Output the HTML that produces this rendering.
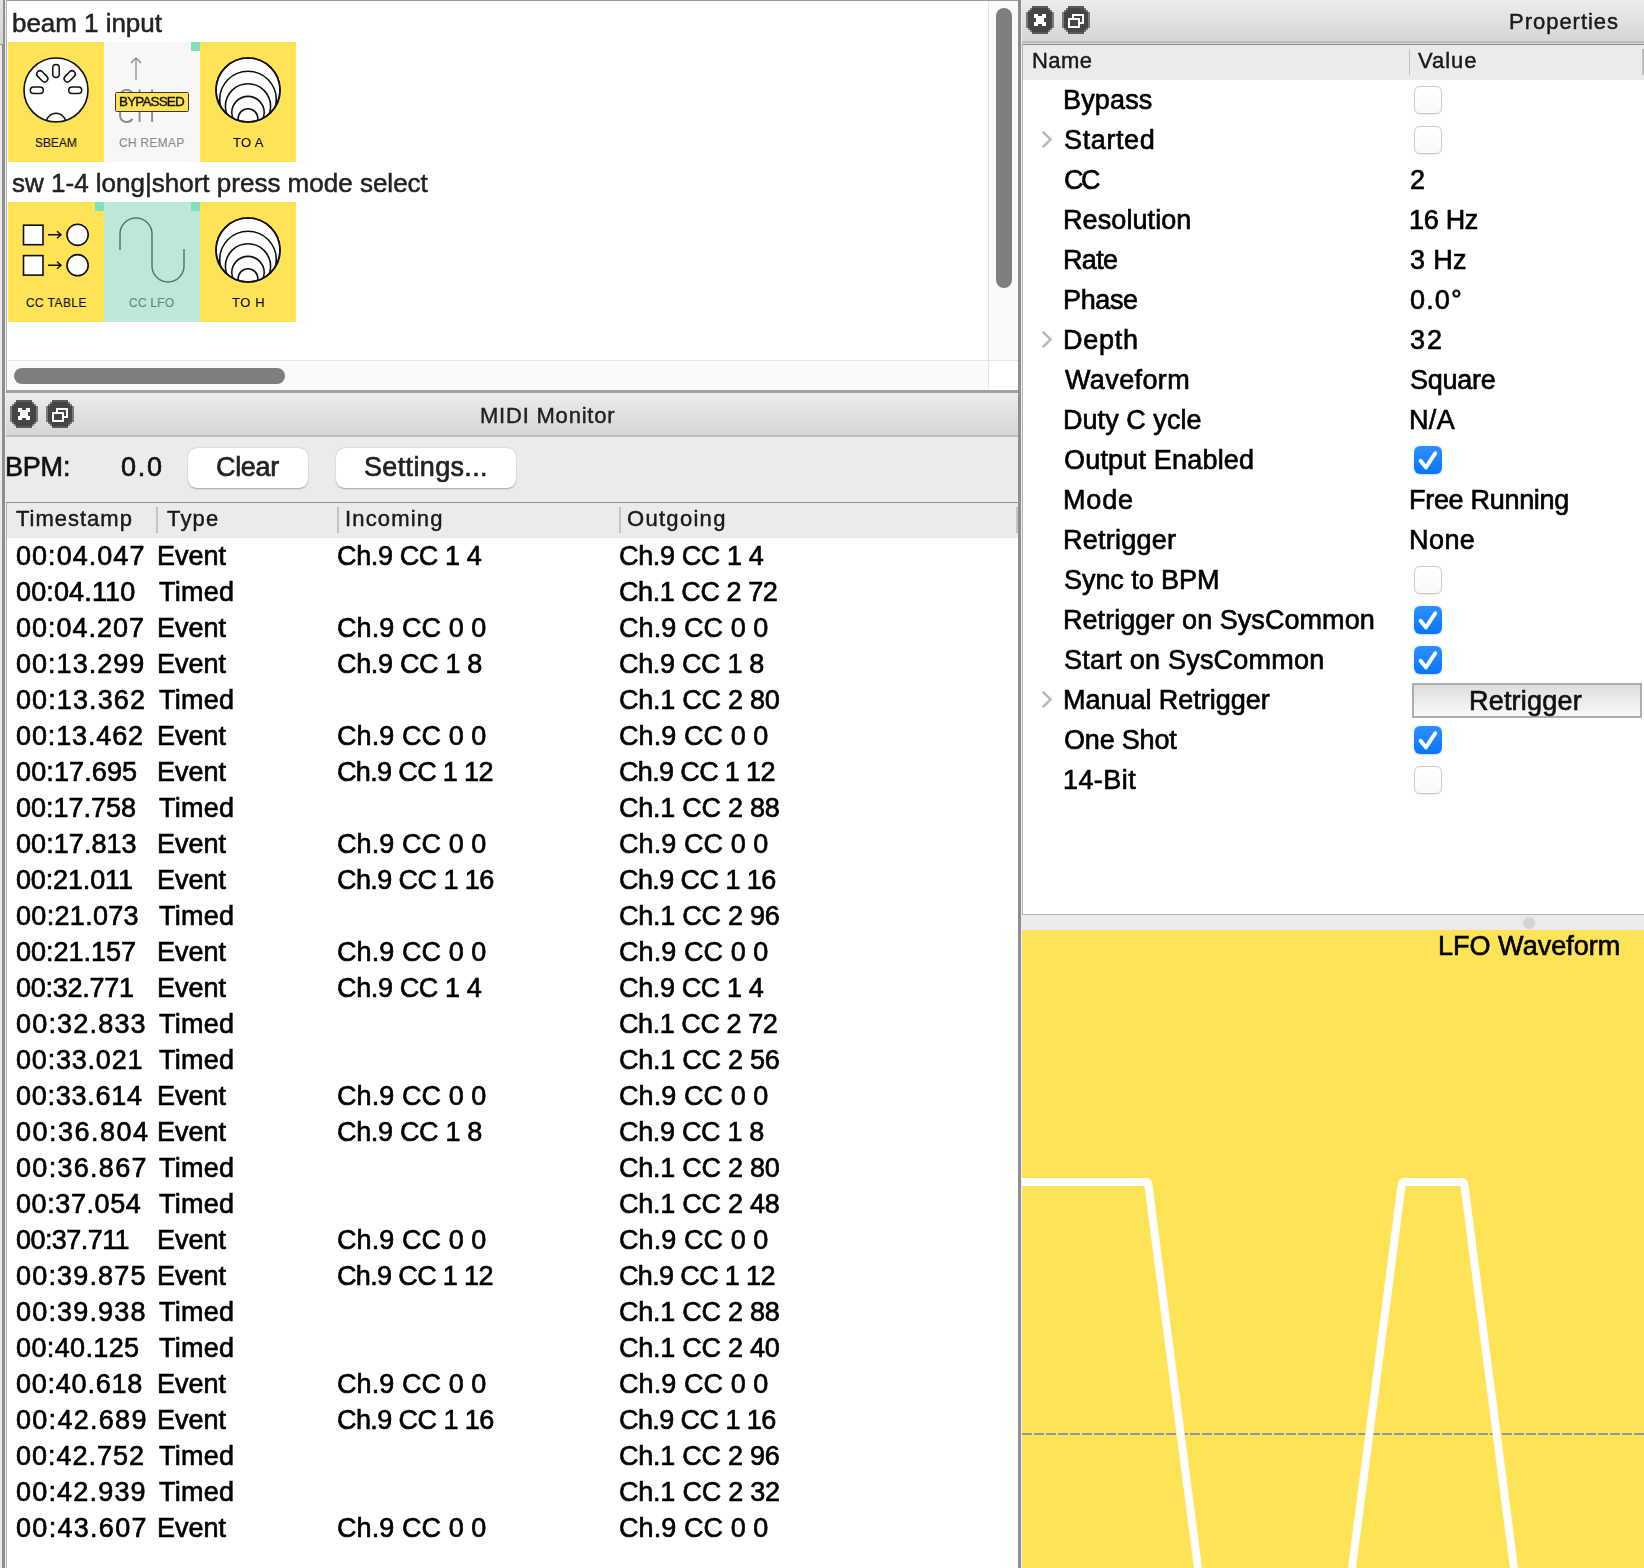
<!DOCTYPE html>
<html><head><meta charset="utf-8"><style>
html,body{margin:0;padding:0;}
body{width:1644px;height:1568px;overflow:hidden;position:relative;background:#ebebeb;font-family:"Liberation Sans", sans-serif;}
body>div,.abs,.t{position:absolute;}
.t{white-space:pre;will-change:transform;}
</style></head><body>
<div style="left:0px;top:0px;width:3px;height:44px;background:linear-gradient(#e2e2e2,#d6d6d6)"></div>
<div style="left:0px;top:44px;width:3px;height:1px;background:#8e8e8e"></div>
<div style="left:2px;top:45px;width:3px;height:1523px;background:#8e8e8e"></div>
<div style="left:3px;top:0px;width:2px;height:45px;background:#8e8e8e"></div>
<div style="left:5px;top:0px;width:1px;height:1568px;background:#eeeeee"></div>
<div style="left:6px;top:0px;width:1px;height:393px;background:#b4b4b4"></div>
<div style="left:7px;top:0px;width:1011px;height:1px;background:#9a9a9a"></div>
<div style="left:7px;top:1px;width:1011px;height:389px;background:#fff"></div>
<div style="left:988px;top:1px;width:30px;height:359px;background:#fafafa;border-left:1px solid #e6e6e6;box-sizing:border-box"></div>
<div style="left:996px;top:8px;width:16px;height:280px;background:#7f7f7f;border-radius:8px"></div>
<div style="left:7px;top:360px;width:981px;height:30px;background:#fafafa;border-top:1px solid #e6e6e6;box-sizing:border-box"></div>
<div style="left:14px;top:368px;width:271px;height:16px;background:#7f7f7f;border-radius:8px"></div>
<div style="left:988px;top:360px;width:30px;height:30px;background:#fff;border-left:1px solid #e6e6e6;border-top:1px solid #e6e6e6;box-sizing:border-box"></div>
<div style="left:6px;top:390px;width:1012px;height:3px;background:#a2a2a2"></div>
<span class="t" style="left:11.60px;top:9.79px;font-size:26px;line-height:26px;color:#222;letter-spacing:-0.036px;-webkit-text-stroke:0.5px #222;">beam 1 input</span>
<span class="t" style="left:11.50px;top:169.69px;font-size:26px;line-height:26px;color:#222;letter-spacing:0.003px;-webkit-text-stroke:0.5px #222;">sw 1-4 long|short press mode select</span>
<div style="left:8px;top:42px;width:96px;height:120px;background:#fee356"></div>
<div style="left:104px;top:42px;width:96px;height:120px;background:#f7f7f7"></div>
<div style="left:191px;top:42px;width:9px;height:9px;background:#80dfbd"></div>
<div style="left:200px;top:42px;width:96px;height:120px;background:#fee356"></div>
<div style="left:8px;top:202px;width:96px;height:120px;background:#fee356"></div>
<div style="left:95px;top:202px;width:9px;height:9px;background:#80dfbd"></div>
<div style="left:104px;top:202px;width:96px;height:120px;background:#bde8d8"></div>
<div style="left:191px;top:202px;width:9px;height:9px;background:#80dfbd"></div>
<div style="left:200px;top:202px;width:96px;height:120px;background:#fee356"></div>
<span class="t" style="left:35.04px;top:136.30px;font-size:13px;line-height:13px;color:#111;letter-spacing:0.005px;-webkit-text-stroke:0.15px #111;transform:scaleX(0.92);transform-origin:0 0;">SBEAM</span>
<span class="t" style="left:119.45px;top:136.30px;font-size:13px;line-height:13px;color:#888;letter-spacing:0.324px;-webkit-text-stroke:0.15px #888;transform:scaleX(0.92);transform-origin:0 0;">CH REMAP</span>
<span class="t" style="left:232.60px;top:136.30px;font-size:13px;line-height:13px;color:#111;letter-spacing:0.333px;-webkit-text-stroke:0.15px #111;">TO A</span>
<span class="t" style="left:25.95px;top:296.30px;font-size:13px;line-height:13px;color:#111;letter-spacing:0.482px;-webkit-text-stroke:0.15px #111;transform:scaleX(0.92);transform-origin:0 0;">CC TABLE</span>
<span class="t" style="left:129.45px;top:296.30px;font-size:13px;line-height:13px;color:#5b8a7b;letter-spacing:0.309px;-webkit-text-stroke:0.15px #5b8a7b;transform:scaleX(0.92);transform-origin:0 0;">CC LFO</span>
<span class="t" style="left:231.80px;top:296.30px;font-size:13px;line-height:13px;color:#111;letter-spacing:0.600px;-webkit-text-stroke:0.15px #111;">TO H</span>
<svg class="abs" width="300" height="330" style="left:0;top:0"><circle cx="56" cy="90" r="32" fill="#fff" stroke="#111" stroke-width="1.6"/><rect x="52.75" y="64.5" width="6.5" height="13" rx="3.25" fill="#fff" stroke="#111" stroke-width="1.5" transform="rotate(0 56 71)"/><rect x="39.05" y="69.9" width="6.5" height="13" rx="3.25" fill="#fff" stroke="#111" stroke-width="1.5" transform="rotate(-45 42.3 76.4)"/><rect x="66.45" y="69.9" width="6.5" height="13" rx="3.25" fill="#fff" stroke="#111" stroke-width="1.5" transform="rotate(45 69.7 76.4)"/><rect x="30.299999999999997" y="87.05" width="13" height="6.5" rx="3.25" fill="#fff" stroke="#111" stroke-width="1.5" transform="rotate(0 36.8 90.3)"/><rect x="68.7" y="87.05" width="13" height="6.5" rx="3.25" fill="#fff" stroke="#111" stroke-width="1.5" transform="rotate(0 75.2 90.3)"/><path d="M46.3 120.8 A10 10 0 0 1 65.7 120.8" fill="none" stroke="#111" stroke-width="1.5"/><clipPath id="c1"><circle cx="248" cy="90" r="32"/></clipPath><circle cx="248" cy="90" r="32" fill="#fff" stroke="#111" stroke-width="1.6"/><g clip-path="url(#c1)" fill="none" stroke="#111" stroke-width="1.6"><circle cx="248" cy="99.5" r="28.3"/><circle cx="248" cy="106.3" r="22.6"/><circle cx="248" cy="112.6" r="16.2"/><circle cx="248" cy="118.6" r="9.9"/></g><circle cx="248" cy="90" r="32" fill="none" stroke="#111" stroke-width="1.6"/><clipPath id="c2"><circle cx="248" cy="250" r="32"/></clipPath><circle cx="248" cy="250" r="32" fill="#fff" stroke="#111" stroke-width="1.6"/><g clip-path="url(#c2)" fill="none" stroke="#111" stroke-width="1.6"><circle cx="248" cy="259.5" r="28.3"/><circle cx="248" cy="266.3" r="22.6"/><circle cx="248" cy="272.6" r="16.2"/><circle cx="248" cy="278.6" r="9.9"/></g><circle cx="248" cy="250" r="32" fill="none" stroke="#111" stroke-width="1.6"/><path d="M136 80 V58 M131 63 L136 58 L141 63" fill="none" stroke="#8a8a8a" stroke-width="1.3"/><path d="M132.4 93.2 A6.6 6.6 0 0 0 120.1 96.7 V115.2 A6.6 6.6 0 0 0 132.4 118.7" fill="none" stroke="#8c8c8c" stroke-width="1.9"/><path d="M139.6 89.5 V122 M152.1 89.5 V122 M139.6 105.6 H152.1" fill="none" stroke="#8c8c8c" stroke-width="1.9"/><rect x="23.5" y="225.20000000000002" width="19.5" height="19.5" fill="#fff" stroke="#111" stroke-width="1.6"/><circle cx="77.6" cy="234.8" r="10.6" fill="#fff" stroke="#111" stroke-width="1.6"/><path d="M48 234.8 H61 M57 231.3 L61 234.8 L57 238.3" fill="none" stroke="#111" stroke-width="1.5"/><rect x="23.5" y="255.6" width="19.5" height="19.5" fill="#fff" stroke="#111" stroke-width="1.6"/><circle cx="77.6" cy="265.2" r="10.6" fill="#fff" stroke="#111" stroke-width="1.6"/><path d="M48 265.2 H61 M57 261.7 L61 265.2 L57 268.7" fill="none" stroke="#111" stroke-width="1.5"/><path d="M120 250 V234 A16 16 0 0 1 152 234 V266 A16 16 0 0 0 184 266 V249" fill="none" stroke="#4f7b6c" stroke-width="1.5"/></svg>
<div style="left:115.2px;top:92.3px;width:73.6px;height:19.3px;background:#fee356;border:1.7px solid #3a3530;border-radius:1.5px;box-sizing:border-box"></div>
<span class="t" style="left:118.70px;top:95.37px;font-size:13.5px;line-height:13.5px;color:#111;letter-spacing:-0.871px;-webkit-text-stroke:0.35px #111;">BYPASSED</span>
<div style="left:6px;top:393px;width:1012px;height:42px;background:linear-gradient(#ececec,#d6d6d6)"></div>
<div style="left:6px;top:435px;width:1012px;height:2px;background:#bbbbbb"></div>
<div style="left:6px;top:437px;width:1012px;height:65px;background:#ebebeb"></div>
<span class="t" style="left:480.10px;top:405.08px;font-size:22px;line-height:22px;color:#222;letter-spacing:0.791px;-webkit-text-stroke:0.45px #222;">MIDI Monitor</span>
<div style="left:188px;top:448px;width:120px;height:40px;background:#fff;border-radius:9px;box-shadow:0 0.5px 1.5px rgba(0,0,0,0.3)"></div>
<div style="left:336px;top:448px;width:180px;height:40px;background:#fff;border-radius:9px;box-shadow:0 0.5px 1.5px rgba(0,0,0,0.3)"></div>
<span class="t" style="left:4.90px;top:454.04px;font-size:27px;line-height:27px;color:#111;letter-spacing:-0.200px;-webkit-text-stroke:0.65px #111;">BPM:</span>
<span class="t" style="left:120.50px;top:454.04px;font-size:27px;line-height:27px;color:#111;letter-spacing:1.700px;-webkit-text-stroke:0.65px #111;">0.0</span>
<span class="t" style="left:215.70px;top:454.04px;font-size:27px;line-height:27px;color:#222;letter-spacing:-0.350px;-webkit-text-stroke:0.65px #222;">Clear</span>
<span class="t" style="left:364.10px;top:454.04px;font-size:27px;line-height:27px;color:#222;letter-spacing:0.350px;-webkit-text-stroke:0.65px #222;">Settings...</span>
<div style="left:6px;top:502px;width:1012px;height:1px;background:#8e8e8e"></div>
<div style="left:6px;top:503px;width:1px;height:1065px;background:#b4b4b4"></div>
<div style="left:7px;top:503px;width:1011px;height:35px;background:#ebebeb"></div>
<div style="left:7px;top:538px;width:1011px;height:1030px;background:#fff"></div>
<div style="left:156px;top:507px;width:1.5px;height:26px;background:#c4c4c4"></div>
<div style="left:337px;top:507px;width:1.5px;height:26px;background:#c4c4c4"></div>
<div style="left:619px;top:507px;width:1.5px;height:26px;background:#c4c4c4"></div>
<div style="left:1016px;top:507px;width:1.5px;height:26px;background:#c4c4c4"></div>
<span class="t" style="left:16.20px;top:508.38px;font-size:22px;line-height:22px;color:#1a1a1a;letter-spacing:0.987px;-webkit-text-stroke:0.45px #1a1a1a;">Timestamp</span>
<span class="t" style="left:167.10px;top:508.38px;font-size:22px;line-height:22px;color:#1a1a1a;letter-spacing:1.200px;-webkit-text-stroke:0.45px #1a1a1a;">Type</span>
<span class="t" style="left:344.70px;top:508.38px;font-size:22px;line-height:22px;color:#1a1a1a;letter-spacing:1.157px;-webkit-text-stroke:0.45px #1a1a1a;">Incoming</span>
<span class="t" style="left:627.30px;top:508.38px;font-size:22px;line-height:22px;color:#1a1a1a;letter-spacing:1.300px;-webkit-text-stroke:0.45px #1a1a1a;">Outgoing</span>
<span class="t" style="left:15.50px;top:542.94px;font-size:27px;line-height:27px;color:#000;letter-spacing:1.037px;-webkit-text-stroke:0.65px #000;">00:04.047</span>
<span class="t" style="left:157.40px;top:542.94px;font-size:27px;line-height:27px;color:#000;letter-spacing:0.000px;-webkit-text-stroke:0.65px #000;">Event</span>
<span class="t" style="left:337.40px;top:542.94px;font-size:27px;line-height:27px;color:#000;letter-spacing:-0.370px;-webkit-text-stroke:0.65px #000;">Ch.9 CC 1 4</span>
<span class="t" style="left:619.40px;top:542.94px;font-size:27px;line-height:27px;color:#000;letter-spacing:-0.370px;-webkit-text-stroke:0.65px #000;">Ch.9 CC 1 4</span>
<span class="t" style="left:15.50px;top:578.94px;font-size:27px;line-height:27px;color:#000;letter-spacing:0.137px;-webkit-text-stroke:0.65px #000;">00:04.110</span>
<span class="t" style="left:159.00px;top:578.94px;font-size:27px;line-height:27px;color:#000;letter-spacing:0.275px;-webkit-text-stroke:0.65px #000;">Timed</span>
<span class="t" style="left:619.40px;top:578.94px;font-size:27px;line-height:27px;color:#000;letter-spacing:-0.436px;-webkit-text-stroke:0.65px #000;">Ch.1 CC 2 72</span>
<span class="t" style="left:15.50px;top:614.94px;font-size:27px;line-height:27px;color:#000;letter-spacing:0.975px;-webkit-text-stroke:0.65px #000;">00:04.207</span>
<span class="t" style="left:157.40px;top:614.94px;font-size:27px;line-height:27px;color:#000;letter-spacing:0.000px;-webkit-text-stroke:0.65px #000;">Event</span>
<span class="t" style="left:337.40px;top:614.94px;font-size:27px;line-height:27px;color:#000;letter-spacing:0.080px;-webkit-text-stroke:0.65px #000;">Ch.9 CC 0 0</span>
<span class="t" style="left:619.40px;top:614.94px;font-size:27px;line-height:27px;color:#000;letter-spacing:0.080px;-webkit-text-stroke:0.65px #000;">Ch.9 CC 0 0</span>
<span class="t" style="left:15.50px;top:650.94px;font-size:27px;line-height:27px;color:#000;letter-spacing:1.025px;-webkit-text-stroke:0.65px #000;">00:13.299</span>
<span class="t" style="left:157.40px;top:650.94px;font-size:27px;line-height:27px;color:#000;letter-spacing:0.000px;-webkit-text-stroke:0.65px #000;">Event</span>
<span class="t" style="left:337.40px;top:650.94px;font-size:27px;line-height:27px;color:#000;letter-spacing:-0.330px;-webkit-text-stroke:0.65px #000;">Ch.9 CC 1 8</span>
<span class="t" style="left:619.40px;top:650.94px;font-size:27px;line-height:27px;color:#000;letter-spacing:-0.330px;-webkit-text-stroke:0.65px #000;">Ch.9 CC 1 8</span>
<span class="t" style="left:15.50px;top:686.94px;font-size:27px;line-height:27px;color:#000;letter-spacing:1.100px;-webkit-text-stroke:0.65px #000;">00:13.362</span>
<span class="t" style="left:159.00px;top:686.94px;font-size:27px;line-height:27px;color:#000;letter-spacing:0.275px;-webkit-text-stroke:0.65px #000;">Timed</span>
<span class="t" style="left:619.40px;top:686.94px;font-size:27px;line-height:27px;color:#000;letter-spacing:-0.255px;-webkit-text-stroke:0.65px #000;">Ch.1 CC 2 80</span>
<span class="t" style="left:15.50px;top:722.94px;font-size:27px;line-height:27px;color:#000;letter-spacing:0.875px;-webkit-text-stroke:0.65px #000;">00:13.462</span>
<span class="t" style="left:157.40px;top:722.94px;font-size:27px;line-height:27px;color:#000;letter-spacing:0.000px;-webkit-text-stroke:0.65px #000;">Event</span>
<span class="t" style="left:337.40px;top:722.94px;font-size:27px;line-height:27px;color:#000;letter-spacing:0.080px;-webkit-text-stroke:0.65px #000;">Ch.9 CC 0 0</span>
<span class="t" style="left:619.40px;top:722.94px;font-size:27px;line-height:27px;color:#000;letter-spacing:0.080px;-webkit-text-stroke:0.65px #000;">Ch.9 CC 0 0</span>
<span class="t" style="left:15.50px;top:758.94px;font-size:27px;line-height:27px;color:#000;letter-spacing:0.125px;-webkit-text-stroke:0.65px #000;">00:17.695</span>
<span class="t" style="left:157.40px;top:758.94px;font-size:27px;line-height:27px;color:#000;letter-spacing:0.000px;-webkit-text-stroke:0.65px #000;">Event</span>
<span class="t" style="left:337.40px;top:758.94px;font-size:27px;line-height:27px;color:#000;letter-spacing:-0.645px;-webkit-text-stroke:0.65px #000;">Ch.9 CC 1 12</span>
<span class="t" style="left:619.40px;top:758.94px;font-size:27px;line-height:27px;color:#000;letter-spacing:-0.645px;-webkit-text-stroke:0.65px #000;">Ch.9 CC 1 12</span>
<span class="t" style="left:15.50px;top:794.94px;font-size:27px;line-height:27px;color:#000;letter-spacing:0.000px;-webkit-text-stroke:0.65px #000;">00:17.758</span>
<span class="t" style="left:159.00px;top:794.94px;font-size:27px;line-height:27px;color:#000;letter-spacing:0.275px;-webkit-text-stroke:0.65px #000;">Timed</span>
<span class="t" style="left:619.40px;top:794.94px;font-size:27px;line-height:27px;color:#000;letter-spacing:-0.245px;-webkit-text-stroke:0.65px #000;">Ch.1 CC 2 88</span>
<span class="t" style="left:15.50px;top:830.94px;font-size:27px;line-height:27px;color:#000;letter-spacing:0.062px;-webkit-text-stroke:0.65px #000;">00:17.813</span>
<span class="t" style="left:157.40px;top:830.94px;font-size:27px;line-height:27px;color:#000;letter-spacing:0.000px;-webkit-text-stroke:0.65px #000;">Event</span>
<span class="t" style="left:337.40px;top:830.94px;font-size:27px;line-height:27px;color:#000;letter-spacing:0.080px;-webkit-text-stroke:0.65px #000;">Ch.9 CC 0 0</span>
<span class="t" style="left:619.40px;top:830.94px;font-size:27px;line-height:27px;color:#000;letter-spacing:0.080px;-webkit-text-stroke:0.65px #000;">Ch.9 CC 0 0</span>
<span class="t" style="left:15.50px;top:866.94px;font-size:27px;line-height:27px;color:#000;letter-spacing:-0.150px;-webkit-text-stroke:0.65px #000;">00:21.011</span>
<span class="t" style="left:157.40px;top:866.94px;font-size:27px;line-height:27px;color:#000;letter-spacing:0.000px;-webkit-text-stroke:0.65px #000;">Event</span>
<span class="t" style="left:337.40px;top:866.94px;font-size:27px;line-height:27px;color:#000;letter-spacing:-0.582px;-webkit-text-stroke:0.65px #000;">Ch.9 CC 1 16</span>
<span class="t" style="left:619.40px;top:866.94px;font-size:27px;line-height:27px;color:#000;letter-spacing:-0.582px;-webkit-text-stroke:0.65px #000;">Ch.9 CC 1 16</span>
<span class="t" style="left:15.50px;top:902.94px;font-size:27px;line-height:27px;color:#000;letter-spacing:0.312px;-webkit-text-stroke:0.65px #000;">00:21.073</span>
<span class="t" style="left:159.00px;top:902.94px;font-size:27px;line-height:27px;color:#000;letter-spacing:0.275px;-webkit-text-stroke:0.65px #000;">Timed</span>
<span class="t" style="left:619.40px;top:902.94px;font-size:27px;line-height:27px;color:#000;letter-spacing:-0.245px;-webkit-text-stroke:0.65px #000;">Ch.1 CC 2 96</span>
<span class="t" style="left:15.50px;top:938.94px;font-size:27px;line-height:27px;color:#000;letter-spacing:-0.025px;-webkit-text-stroke:0.65px #000;">00:21.157</span>
<span class="t" style="left:157.40px;top:938.94px;font-size:27px;line-height:27px;color:#000;letter-spacing:0.000px;-webkit-text-stroke:0.65px #000;">Event</span>
<span class="t" style="left:337.40px;top:938.94px;font-size:27px;line-height:27px;color:#000;letter-spacing:0.080px;-webkit-text-stroke:0.65px #000;">Ch.9 CC 0 0</span>
<span class="t" style="left:619.40px;top:938.94px;font-size:27px;line-height:27px;color:#000;letter-spacing:0.080px;-webkit-text-stroke:0.65px #000;">Ch.9 CC 0 0</span>
<span class="t" style="left:15.50px;top:974.94px;font-size:27px;line-height:27px;color:#000;letter-spacing:-0.250px;-webkit-text-stroke:0.65px #000;">00:32.771</span>
<span class="t" style="left:157.40px;top:974.94px;font-size:27px;line-height:27px;color:#000;letter-spacing:0.000px;-webkit-text-stroke:0.65px #000;">Event</span>
<span class="t" style="left:337.40px;top:974.94px;font-size:27px;line-height:27px;color:#000;letter-spacing:-0.370px;-webkit-text-stroke:0.65px #000;">Ch.9 CC 1 4</span>
<span class="t" style="left:619.40px;top:974.94px;font-size:27px;line-height:27px;color:#000;letter-spacing:-0.370px;-webkit-text-stroke:0.65px #000;">Ch.9 CC 1 4</span>
<span class="t" style="left:15.50px;top:1010.94px;font-size:27px;line-height:27px;color:#000;letter-spacing:1.188px;-webkit-text-stroke:0.65px #000;">00:32.833</span>
<span class="t" style="left:159.00px;top:1010.94px;font-size:27px;line-height:27px;color:#000;letter-spacing:0.275px;-webkit-text-stroke:0.65px #000;">Timed</span>
<span class="t" style="left:619.40px;top:1010.94px;font-size:27px;line-height:27px;color:#000;letter-spacing:-0.436px;-webkit-text-stroke:0.65px #000;">Ch.1 CC 2 72</span>
<span class="t" style="left:15.50px;top:1046.94px;font-size:27px;line-height:27px;color:#000;letter-spacing:0.800px;-webkit-text-stroke:0.65px #000;">00:33.021</span>
<span class="t" style="left:159.00px;top:1046.94px;font-size:27px;line-height:27px;color:#000;letter-spacing:0.275px;-webkit-text-stroke:0.65px #000;">Timed</span>
<span class="t" style="left:619.40px;top:1046.94px;font-size:27px;line-height:27px;color:#000;letter-spacing:-0.245px;-webkit-text-stroke:0.65px #000;">Ch.1 CC 2 56</span>
<span class="t" style="left:15.50px;top:1082.94px;font-size:27px;line-height:27px;color:#000;letter-spacing:0.725px;-webkit-text-stroke:0.65px #000;">00:33.614</span>
<span class="t" style="left:157.40px;top:1082.94px;font-size:27px;line-height:27px;color:#000;letter-spacing:0.000px;-webkit-text-stroke:0.65px #000;">Event</span>
<span class="t" style="left:337.40px;top:1082.94px;font-size:27px;line-height:27px;color:#000;letter-spacing:0.080px;-webkit-text-stroke:0.65px #000;">Ch.9 CC 0 0</span>
<span class="t" style="left:619.40px;top:1082.94px;font-size:27px;line-height:27px;color:#000;letter-spacing:0.080px;-webkit-text-stroke:0.65px #000;">Ch.9 CC 0 0</span>
<span class="t" style="left:15.50px;top:1118.94px;font-size:27px;line-height:27px;color:#000;letter-spacing:1.500px;-webkit-text-stroke:0.65px #000;">00:36.804</span>
<span class="t" style="left:157.40px;top:1118.94px;font-size:27px;line-height:27px;color:#000;letter-spacing:0.000px;-webkit-text-stroke:0.65px #000;">Event</span>
<span class="t" style="left:337.40px;top:1118.94px;font-size:27px;line-height:27px;color:#000;letter-spacing:-0.330px;-webkit-text-stroke:0.65px #000;">Ch.9 CC 1 8</span>
<span class="t" style="left:619.40px;top:1118.94px;font-size:27px;line-height:27px;color:#000;letter-spacing:-0.330px;-webkit-text-stroke:0.65px #000;">Ch.9 CC 1 8</span>
<span class="t" style="left:15.50px;top:1154.94px;font-size:27px;line-height:27px;color:#000;letter-spacing:1.300px;-webkit-text-stroke:0.65px #000;">00:36.867</span>
<span class="t" style="left:159.00px;top:1154.94px;font-size:27px;line-height:27px;color:#000;letter-spacing:0.275px;-webkit-text-stroke:0.65px #000;">Timed</span>
<span class="t" style="left:619.40px;top:1154.94px;font-size:27px;line-height:27px;color:#000;letter-spacing:-0.255px;-webkit-text-stroke:0.65px #000;">Ch.1 CC 2 80</span>
<span class="t" style="left:15.50px;top:1190.94px;font-size:27px;line-height:27px;color:#000;letter-spacing:0.587px;-webkit-text-stroke:0.65px #000;">00:37.054</span>
<span class="t" style="left:159.00px;top:1190.94px;font-size:27px;line-height:27px;color:#000;letter-spacing:0.275px;-webkit-text-stroke:0.65px #000;">Timed</span>
<span class="t" style="left:619.40px;top:1190.94px;font-size:27px;line-height:27px;color:#000;letter-spacing:-0.245px;-webkit-text-stroke:0.65px #000;">Ch.1 CC 2 48</span>
<span class="t" style="left:15.50px;top:1226.94px;font-size:27px;line-height:27px;color:#000;letter-spacing:-0.562px;-webkit-text-stroke:0.65px #000;">00:37.711</span>
<span class="t" style="left:157.40px;top:1226.94px;font-size:27px;line-height:27px;color:#000;letter-spacing:0.000px;-webkit-text-stroke:0.65px #000;">Event</span>
<span class="t" style="left:337.40px;top:1226.94px;font-size:27px;line-height:27px;color:#000;letter-spacing:0.080px;-webkit-text-stroke:0.65px #000;">Ch.9 CC 0 0</span>
<span class="t" style="left:619.40px;top:1226.94px;font-size:27px;line-height:27px;color:#000;letter-spacing:0.080px;-webkit-text-stroke:0.65px #000;">Ch.9 CC 0 0</span>
<span class="t" style="left:15.50px;top:1262.94px;font-size:27px;line-height:27px;color:#000;letter-spacing:1.175px;-webkit-text-stroke:0.65px #000;">00:39.875</span>
<span class="t" style="left:157.40px;top:1262.94px;font-size:27px;line-height:27px;color:#000;letter-spacing:0.000px;-webkit-text-stroke:0.65px #000;">Event</span>
<span class="t" style="left:337.40px;top:1262.94px;font-size:27px;line-height:27px;color:#000;letter-spacing:-0.645px;-webkit-text-stroke:0.65px #000;">Ch.9 CC 1 12</span>
<span class="t" style="left:619.40px;top:1262.94px;font-size:27px;line-height:27px;color:#000;letter-spacing:-0.645px;-webkit-text-stroke:0.65px #000;">Ch.9 CC 1 12</span>
<span class="t" style="left:15.50px;top:1298.94px;font-size:27px;line-height:27px;color:#000;letter-spacing:1.175px;-webkit-text-stroke:0.65px #000;">00:39.938</span>
<span class="t" style="left:159.00px;top:1298.94px;font-size:27px;line-height:27px;color:#000;letter-spacing:0.275px;-webkit-text-stroke:0.65px #000;">Timed</span>
<span class="t" style="left:619.40px;top:1298.94px;font-size:27px;line-height:27px;color:#000;letter-spacing:-0.245px;-webkit-text-stroke:0.65px #000;">Ch.1 CC 2 88</span>
<span class="t" style="left:15.50px;top:1334.94px;font-size:27px;line-height:27px;color:#000;letter-spacing:0.375px;-webkit-text-stroke:0.65px #000;">00:40.125</span>
<span class="t" style="left:159.00px;top:1334.94px;font-size:27px;line-height:27px;color:#000;letter-spacing:0.275px;-webkit-text-stroke:0.65px #000;">Timed</span>
<span class="t" style="left:619.40px;top:1334.94px;font-size:27px;line-height:27px;color:#000;letter-spacing:-0.255px;-webkit-text-stroke:0.65px #000;">Ch.1 CC 2 40</span>
<span class="t" style="left:15.50px;top:1370.94px;font-size:27px;line-height:27px;color:#000;letter-spacing:0.762px;-webkit-text-stroke:0.65px #000;">00:40.618</span>
<span class="t" style="left:157.40px;top:1370.94px;font-size:27px;line-height:27px;color:#000;letter-spacing:0.000px;-webkit-text-stroke:0.65px #000;">Event</span>
<span class="t" style="left:337.40px;top:1370.94px;font-size:27px;line-height:27px;color:#000;letter-spacing:0.080px;-webkit-text-stroke:0.65px #000;">Ch.9 CC 0 0</span>
<span class="t" style="left:619.40px;top:1370.94px;font-size:27px;line-height:27px;color:#000;letter-spacing:0.080px;-webkit-text-stroke:0.65px #000;">Ch.9 CC 0 0</span>
<span class="t" style="left:15.50px;top:1406.94px;font-size:27px;line-height:27px;color:#000;letter-spacing:1.287px;-webkit-text-stroke:0.65px #000;">00:42.689</span>
<span class="t" style="left:157.40px;top:1406.94px;font-size:27px;line-height:27px;color:#000;letter-spacing:0.000px;-webkit-text-stroke:0.65px #000;">Event</span>
<span class="t" style="left:337.40px;top:1406.94px;font-size:27px;line-height:27px;color:#000;letter-spacing:-0.582px;-webkit-text-stroke:0.65px #000;">Ch.9 CC 1 16</span>
<span class="t" style="left:619.40px;top:1406.94px;font-size:27px;line-height:27px;color:#000;letter-spacing:-0.582px;-webkit-text-stroke:0.65px #000;">Ch.9 CC 1 16</span>
<span class="t" style="left:15.50px;top:1442.94px;font-size:27px;line-height:27px;color:#000;letter-spacing:0.975px;-webkit-text-stroke:0.65px #000;">00:42.752</span>
<span class="t" style="left:159.00px;top:1442.94px;font-size:27px;line-height:27px;color:#000;letter-spacing:0.275px;-webkit-text-stroke:0.65px #000;">Timed</span>
<span class="t" style="left:619.40px;top:1442.94px;font-size:27px;line-height:27px;color:#000;letter-spacing:-0.245px;-webkit-text-stroke:0.65px #000;">Ch.1 CC 2 96</span>
<span class="t" style="left:15.50px;top:1478.94px;font-size:27px;line-height:27px;color:#000;letter-spacing:1.188px;-webkit-text-stroke:0.65px #000;">00:42.939</span>
<span class="t" style="left:159.00px;top:1478.94px;font-size:27px;line-height:27px;color:#000;letter-spacing:0.275px;-webkit-text-stroke:0.65px #000;">Timed</span>
<span class="t" style="left:619.40px;top:1478.94px;font-size:27px;line-height:27px;color:#000;letter-spacing:-0.227px;-webkit-text-stroke:0.65px #000;">Ch.1 CC 2 32</span>
<span class="t" style="left:15.50px;top:1514.94px;font-size:27px;line-height:27px;color:#000;letter-spacing:1.300px;-webkit-text-stroke:0.65px #000;">00:43.607</span>
<span class="t" style="left:157.40px;top:1514.94px;font-size:27px;line-height:27px;color:#000;letter-spacing:0.000px;-webkit-text-stroke:0.65px #000;">Event</span>
<span class="t" style="left:337.40px;top:1514.94px;font-size:27px;line-height:27px;color:#000;letter-spacing:0.080px;-webkit-text-stroke:0.65px #000;">Ch.9 CC 0 0</span>
<span class="t" style="left:619.40px;top:1514.94px;font-size:27px;line-height:27px;color:#000;letter-spacing:0.080px;-webkit-text-stroke:0.65px #000;">Ch.9 CC 0 0</span>
<div style="left:1018px;top:0px;width:3px;height:1568px;background:#8e8e8e"></div>
<div style="left:1021px;top:0px;width:1px;height:1568px;background:#eeeeee"></div>
<div style="left:1022px;top:0px;width:622px;height:41px;background:linear-gradient(#ececec,#d6d6d6)"></div>
<div style="left:1022px;top:41px;width:622px;height:2px;background:#bdbdbd"></div>
<div style="left:1022px;top:43px;width:622px;height:1px;background:#d6d6d6"></div>
<div style="left:1022px;top:44px;width:622px;height:1px;background:#8e8e8e"></div>
<div style="left:1022px;top:45px;width:1px;height:870px;background:#b4b4b4"></div>
<div style="left:1023px;top:45px;width:621px;height:35px;background:#ebebeb"></div>
<div style="left:1023px;top:80px;width:621px;height:834px;background:#fff"></div>
<div style="left:1022px;top:914px;width:622px;height:1px;background:#b4b4b4"></div>
<div style="left:1022px;top:915px;width:622px;height:15px;background:#ebebeb"></div>
<div style="left:1523px;top:917px;width:12px;height:12px;border-radius:6px;background:#d4d4d4"></div>
<span class="t" style="left:1509.00px;top:11.28px;font-size:22px;line-height:22px;color:#1a1a1a;letter-spacing:0.978px;-webkit-text-stroke:0.45px #1a1a1a;">Properties</span>
<div style="left:1408.5px;top:49px;width:1.5px;height:26px;background:#c4c4c4"></div>
<div style="left:1642px;top:49px;width:2px;height:26px;background:#c0c0c0"></div>
<span class="t" style="left:1031.70px;top:49.88px;font-size:22px;line-height:22px;color:#1a1a1a;letter-spacing:0.467px;-webkit-text-stroke:0.45px #1a1a1a;">Name</span>
<span class="t" style="left:1418.40px;top:50.38px;font-size:22px;line-height:22px;color:#1a1a1a;letter-spacing:0.975px;-webkit-text-stroke:0.45px #1a1a1a;">Value</span>
<span class="t" style="left:1063.00px;top:87.04px;font-size:27px;line-height:27px;color:#000;letter-spacing:0.160px;-webkit-text-stroke:0.65px #000;">Bypass</span>
<div style="left:1414px;top:86px;width:28px;height:28px;border-radius:6px;background:linear-gradient(#fff,#fafafa);border:1px solid #c9c9c9;box-sizing:border-box;box-shadow:0 0.5px 1px rgba(0,0,0,0.08)"></div>
<span class="t" style="left:1064.00px;top:127.04px;font-size:27px;line-height:27px;color:#000;letter-spacing:0.617px;-webkit-text-stroke:0.65px #000;">Started</span>
<div style="left:1414px;top:126px;width:28px;height:28px;border-radius:6px;background:linear-gradient(#fff,#fafafa);border:1px solid #c9c9c9;box-sizing:border-box;box-shadow:0 0.5px 1px rgba(0,0,0,0.08)"></div>
<span class="t" style="left:1063.90px;top:167.04px;font-size:27px;line-height:27px;color:#000;letter-spacing:-2.400px;-webkit-text-stroke:0.65px #000;">CC</span>
<span class="t" style="left:1409.70px;top:167.04px;font-size:27px;line-height:27px;color:#000;letter-spacing:0.000px;-webkit-text-stroke:0.65px #000;">2</span>
<span class="t" style="left:1063.00px;top:207.04px;font-size:27px;line-height:27px;color:#000;letter-spacing:0.089px;-webkit-text-stroke:0.65px #000;">Resolution</span>
<span class="t" style="left:1409.00px;top:207.04px;font-size:27px;line-height:27px;color:#000;letter-spacing:-0.300px;-webkit-text-stroke:0.65px #000;">16 Hz</span>
<span class="t" style="left:1063.00px;top:247.04px;font-size:27px;line-height:27px;color:#000;letter-spacing:-0.667px;-webkit-text-stroke:0.65px #000;">Rate</span>
<span class="t" style="left:1410.00px;top:247.04px;font-size:27px;line-height:27px;color:#000;letter-spacing:0.367px;-webkit-text-stroke:0.65px #000;">3 Hz</span>
<span class="t" style="left:1063.00px;top:287.04px;font-size:27px;line-height:27px;color:#000;letter-spacing:-0.375px;-webkit-text-stroke:0.65px #000;">Phase</span>
<span class="t" style="left:1410.00px;top:287.04px;font-size:27px;line-height:27px;color:#000;letter-spacing:1.167px;-webkit-text-stroke:0.65px #000;">0.0°</span>
<span class="t" style="left:1063.00px;top:327.04px;font-size:27px;line-height:27px;color:#000;letter-spacing:0.725px;-webkit-text-stroke:0.65px #000;">Depth</span>
<span class="t" style="left:1410.00px;top:327.04px;font-size:27px;line-height:27px;color:#000;letter-spacing:1.900px;-webkit-text-stroke:0.65px #000;">32</span>
<span class="t" style="left:1065.10px;top:367.04px;font-size:27px;line-height:27px;color:#000;letter-spacing:0.386px;-webkit-text-stroke:0.65px #000;">Waveform</span>
<span class="t" style="left:1409.80px;top:367.04px;font-size:27px;line-height:27px;color:#000;letter-spacing:-0.280px;-webkit-text-stroke:0.65px #000;">Square</span>
<span class="t" style="left:1063.00px;top:407.04px;font-size:27px;line-height:27px;color:#000;letter-spacing:0.050px;-webkit-text-stroke:0.65px #000;">Duty C ycle</span>
<span class="t" style="left:1408.80px;top:407.04px;font-size:27px;line-height:27px;color:#000;letter-spacing:0.350px;-webkit-text-stroke:0.65px #000;">N/A</span>
<span class="t" style="left:1064.00px;top:447.04px;font-size:27px;line-height:27px;color:#000;letter-spacing:0.185px;-webkit-text-stroke:0.65px #000;">Output Enabled</span>
<div style="left:1414px;top:446px;width:28px;height:28px;border-radius:6px;background:linear-gradient(#2b91ff,#0a74ff);box-shadow:0 0.5px 2px rgba(0,110,255,0.25)"></div>
<svg class="abs" width="28" height="28" style="left:1414px;top:446px"><path d="M6.6 14.8 L11.9 21.4 L21.2 7.2" fill="none" stroke="#fff" stroke-width="3.9" stroke-linecap="round" stroke-linejoin="round"/></svg>
<span class="t" style="left:1063.00px;top:487.04px;font-size:27px;line-height:27px;color:#000;letter-spacing:0.867px;-webkit-text-stroke:0.65px #000;">Mode</span>
<span class="t" style="left:1408.80px;top:487.04px;font-size:27px;line-height:27px;color:#000;letter-spacing:-0.300px;-webkit-text-stroke:0.65px #000;">Free Running</span>
<span class="t" style="left:1063.00px;top:527.04px;font-size:27px;line-height:27px;color:#000;letter-spacing:0.237px;-webkit-text-stroke:0.65px #000;">Retrigger</span>
<span class="t" style="left:1408.80px;top:527.04px;font-size:27px;line-height:27px;color:#000;letter-spacing:0.433px;-webkit-text-stroke:0.65px #000;">None</span>
<span class="t" style="left:1064.00px;top:567.04px;font-size:27px;line-height:27px;color:#000;letter-spacing:-0.060px;-webkit-text-stroke:0.65px #000;">Sync to BPM</span>
<div style="left:1414px;top:566px;width:28px;height:28px;border-radius:6px;background:linear-gradient(#fff,#fafafa);border:1px solid #c9c9c9;box-sizing:border-box;box-shadow:0 0.5px 1px rgba(0,0,0,0.08)"></div>
<span class="t" style="left:1063.00px;top:607.04px;font-size:27px;line-height:27px;color:#000;letter-spacing:0.052px;-webkit-text-stroke:0.65px #000;">Retrigger on SysCommon</span>
<div style="left:1414px;top:606px;width:28px;height:28px;border-radius:6px;background:linear-gradient(#2b91ff,#0a74ff);box-shadow:0 0.5px 2px rgba(0,110,255,0.25)"></div>
<svg class="abs" width="28" height="28" style="left:1414px;top:606px"><path d="M6.6 14.8 L11.9 21.4 L21.2 7.2" fill="none" stroke="#fff" stroke-width="3.9" stroke-linecap="round" stroke-linejoin="round"/></svg>
<span class="t" style="left:1064.00px;top:647.04px;font-size:27px;line-height:27px;color:#000;letter-spacing:0.212px;-webkit-text-stroke:0.65px #000;">Start on SysCommon</span>
<div style="left:1414px;top:646px;width:28px;height:28px;border-radius:6px;background:linear-gradient(#2b91ff,#0a74ff);box-shadow:0 0.5px 2px rgba(0,110,255,0.25)"></div>
<svg class="abs" width="28" height="28" style="left:1414px;top:646px"><path d="M6.6 14.8 L11.9 21.4 L21.2 7.2" fill="none" stroke="#fff" stroke-width="3.9" stroke-linecap="round" stroke-linejoin="round"/></svg>
<span class="t" style="left:1063.00px;top:687.04px;font-size:27px;line-height:27px;color:#000;letter-spacing:-0.027px;-webkit-text-stroke:0.65px #000;">Manual Retrigger</span>
<div style="left:1412px;top:682.5px;width:230px;height:35.5px;background:linear-gradient(#dedede,#f9f9f9);border:2px solid #adadad;box-sizing:border-box"></div>
<span class="t" style="left:1469.40px;top:688.04px;font-size:27px;line-height:27px;color:#111;letter-spacing:0.200px;-webkit-text-stroke:0.65px #111;">Retrigger</span>
<span class="t" style="left:1064.00px;top:727.04px;font-size:27px;line-height:27px;color:#000;letter-spacing:-0.186px;-webkit-text-stroke:0.65px #000;">One Shot</span>
<div style="left:1414px;top:726px;width:28px;height:28px;border-radius:6px;background:linear-gradient(#2b91ff,#0a74ff);box-shadow:0 0.5px 2px rgba(0,110,255,0.25)"></div>
<svg class="abs" width="28" height="28" style="left:1414px;top:726px"><path d="M6.6 14.8 L11.9 21.4 L21.2 7.2" fill="none" stroke="#fff" stroke-width="3.9" stroke-linecap="round" stroke-linejoin="round"/></svg>
<span class="t" style="left:1063.20px;top:767.04px;font-size:27px;line-height:27px;color:#000;letter-spacing:0.420px;-webkit-text-stroke:0.65px #000;">14-Bit</span>
<div style="left:1414px;top:766px;width:28px;height:28px;border-radius:6px;background:linear-gradient(#fff,#fafafa);border:1px solid #c9c9c9;box-sizing:border-box;box-shadow:0 0.5px 1px rgba(0,0,0,0.08)"></div>
<svg class="abs" width="1644" height="900" style="left:0;top:0"><path d="M1043.5 132.5 L1050.6 139.4 L1043.5 146.5" fill="none" stroke="#bababa" stroke-width="2.6" stroke-linecap="round" stroke-linejoin="round"/><path d="M1043.5 332.5 L1050.6 339.4 L1043.5 346.5" fill="none" stroke="#bababa" stroke-width="2.6" stroke-linecap="round" stroke-linejoin="round"/><path d="M1043.5 692.5 L1050.6 699.4 L1043.5 706.5" fill="none" stroke="#bababa" stroke-width="2.6" stroke-linecap="round" stroke-linejoin="round"/></svg>
<div style="left:1022px;top:930px;width:622px;height:638px;background:#fee356"></div>
<svg class="abs" width="622" height="638" style="left:1022px;top:930px"><line x1="0" y1="504" x2="622" y2="504" stroke="#9195a6" stroke-width="2" stroke-dasharray="10 2"/><polyline points="-10,252 126,252 176,638" fill="none" stroke="#fff" stroke-width="8" stroke-linejoin="bevel"/><polyline points="330,638 380,252 442,252 492,638" fill="none" stroke="#fff" stroke-width="8" stroke-linejoin="bevel"/></svg>
<span class="t" style="left:1437.60px;top:933.04px;font-size:27px;line-height:27px;color:#000;letter-spacing:0.027px;-webkit-text-stroke:0.65px #000;">LFO Waveform</span>
<svg class="abs" width="64" height="28" style="left:10px;top:400px" shape-rendering="crispEdges"><rect x="6" y="0" width="16" height="2" fill="#7a7a7a"/><rect x="8" y="0" width="12" height="2" fill="#454545"/><rect x="4" y="2" width="20" height="2" fill="#7a7a7a"/><rect x="6" y="2" width="16" height="2" fill="#454545"/><rect x="2" y="4" width="24" height="2" fill="#7a7a7a"/><rect x="4" y="4" width="20" height="2" fill="#454545"/><rect x="0" y="6" width="28" height="2" fill="#7a7a7a"/><rect x="2" y="6" width="24" height="2" fill="#454545"/><rect x="0" y="8" width="28" height="2" fill="#7a7a7a"/><rect x="2" y="8" width="24" height="2" fill="#454545"/><rect x="0" y="10" width="28" height="2" fill="#7a7a7a"/><rect x="2" y="10" width="24" height="2" fill="#454545"/><rect x="0" y="12" width="28" height="2" fill="#7a7a7a"/><rect x="2" y="12" width="24" height="2" fill="#454545"/><rect x="0" y="14" width="28" height="2" fill="#7a7a7a"/><rect x="2" y="14" width="24" height="2" fill="#454545"/><rect x="0" y="16" width="28" height="2" fill="#7a7a7a"/><rect x="2" y="16" width="24" height="2" fill="#454545"/><rect x="0" y="18" width="28" height="2" fill="#7a7a7a"/><rect x="2" y="18" width="24" height="2" fill="#454545"/><rect x="0" y="20" width="28" height="2" fill="#7a7a7a"/><rect x="2" y="20" width="24" height="2" fill="#454545"/><rect x="2" y="22" width="24" height="2" fill="#7a7a7a"/><rect x="4" y="22" width="20" height="2" fill="#454545"/><rect x="4" y="24" width="20" height="2" fill="#7a7a7a"/><rect x="6" y="24" width="16" height="2" fill="#454545"/><rect x="6" y="26" width="16" height="2" fill="#7a7a7a"/><rect x="8" y="26" width="12" height="2" fill="#454545"/><rect x="6" y="0" width="16" height="2" fill="#5a5a5a"/><rect x="6" y="26" width="16" height="2" fill="#5a5a5a"/><rect x="42" y="0" width="16" height="2" fill="#7a7a7a"/><rect x="44" y="0" width="12" height="2" fill="#454545"/><rect x="40" y="2" width="20" height="2" fill="#7a7a7a"/><rect x="42" y="2" width="16" height="2" fill="#454545"/><rect x="38" y="4" width="24" height="2" fill="#7a7a7a"/><rect x="40" y="4" width="20" height="2" fill="#454545"/><rect x="36" y="6" width="28" height="2" fill="#7a7a7a"/><rect x="38" y="6" width="24" height="2" fill="#454545"/><rect x="36" y="8" width="28" height="2" fill="#7a7a7a"/><rect x="38" y="8" width="24" height="2" fill="#454545"/><rect x="36" y="10" width="28" height="2" fill="#7a7a7a"/><rect x="38" y="10" width="24" height="2" fill="#454545"/><rect x="36" y="12" width="28" height="2" fill="#7a7a7a"/><rect x="38" y="12" width="24" height="2" fill="#454545"/><rect x="36" y="14" width="28" height="2" fill="#7a7a7a"/><rect x="38" y="14" width="24" height="2" fill="#454545"/><rect x="36" y="16" width="28" height="2" fill="#7a7a7a"/><rect x="38" y="16" width="24" height="2" fill="#454545"/><rect x="36" y="18" width="28" height="2" fill="#7a7a7a"/><rect x="38" y="18" width="24" height="2" fill="#454545"/><rect x="36" y="20" width="28" height="2" fill="#7a7a7a"/><rect x="38" y="20" width="24" height="2" fill="#454545"/><rect x="38" y="22" width="24" height="2" fill="#7a7a7a"/><rect x="40" y="22" width="20" height="2" fill="#454545"/><rect x="40" y="24" width="20" height="2" fill="#7a7a7a"/><rect x="42" y="24" width="16" height="2" fill="#454545"/><rect x="42" y="26" width="16" height="2" fill="#7a7a7a"/><rect x="44" y="26" width="12" height="2" fill="#454545"/><rect x="42" y="0" width="16" height="2" fill="#5a5a5a"/><rect x="42" y="26" width="16" height="2" fill="#5a5a5a"/><rect x="8" y="8" width="12" height="12" fill="#ffffff"/><rect x="12" y="8" width="4" height="2" fill="#454545"/><rect x="12" y="18" width="4" height="2" fill="#454545"/><rect x="8" y="12" width="2" height="4" fill="#454545"/><rect x="18" y="12" width="2" height="4" fill="#454545"/><rect x="42" y="12" width="12" height="2" fill="#ffffff"/><rect x="42" y="20" width="12" height="2" fill="#ffffff"/><rect x="42" y="12" width="2" height="10" fill="#ffffff"/><rect x="52" y="12" width="2" height="10" fill="#ffffff"/><rect x="46" y="8" width="12" height="2" fill="#ffffff"/><rect x="56" y="8" width="2" height="10" fill="#ffffff"/><rect x="46" y="10" width="2" height="2" fill="#ffffff"/><rect x="54" y="16" width="2" height="2" fill="#ffffff"/></svg>
<svg class="abs" width="64" height="28" style="left:1026px;top:6px" shape-rendering="crispEdges"><rect x="6" y="0" width="16" height="2" fill="#7a7a7a"/><rect x="8" y="0" width="12" height="2" fill="#454545"/><rect x="4" y="2" width="20" height="2" fill="#7a7a7a"/><rect x="6" y="2" width="16" height="2" fill="#454545"/><rect x="2" y="4" width="24" height="2" fill="#7a7a7a"/><rect x="4" y="4" width="20" height="2" fill="#454545"/><rect x="0" y="6" width="28" height="2" fill="#7a7a7a"/><rect x="2" y="6" width="24" height="2" fill="#454545"/><rect x="0" y="8" width="28" height="2" fill="#7a7a7a"/><rect x="2" y="8" width="24" height="2" fill="#454545"/><rect x="0" y="10" width="28" height="2" fill="#7a7a7a"/><rect x="2" y="10" width="24" height="2" fill="#454545"/><rect x="0" y="12" width="28" height="2" fill="#7a7a7a"/><rect x="2" y="12" width="24" height="2" fill="#454545"/><rect x="0" y="14" width="28" height="2" fill="#7a7a7a"/><rect x="2" y="14" width="24" height="2" fill="#454545"/><rect x="0" y="16" width="28" height="2" fill="#7a7a7a"/><rect x="2" y="16" width="24" height="2" fill="#454545"/><rect x="0" y="18" width="28" height="2" fill="#7a7a7a"/><rect x="2" y="18" width="24" height="2" fill="#454545"/><rect x="0" y="20" width="28" height="2" fill="#7a7a7a"/><rect x="2" y="20" width="24" height="2" fill="#454545"/><rect x="2" y="22" width="24" height="2" fill="#7a7a7a"/><rect x="4" y="22" width="20" height="2" fill="#454545"/><rect x="4" y="24" width="20" height="2" fill="#7a7a7a"/><rect x="6" y="24" width="16" height="2" fill="#454545"/><rect x="6" y="26" width="16" height="2" fill="#7a7a7a"/><rect x="8" y="26" width="12" height="2" fill="#454545"/><rect x="6" y="0" width="16" height="2" fill="#5a5a5a"/><rect x="6" y="26" width="16" height="2" fill="#5a5a5a"/><rect x="42" y="0" width="16" height="2" fill="#7a7a7a"/><rect x="44" y="0" width="12" height="2" fill="#454545"/><rect x="40" y="2" width="20" height="2" fill="#7a7a7a"/><rect x="42" y="2" width="16" height="2" fill="#454545"/><rect x="38" y="4" width="24" height="2" fill="#7a7a7a"/><rect x="40" y="4" width="20" height="2" fill="#454545"/><rect x="36" y="6" width="28" height="2" fill="#7a7a7a"/><rect x="38" y="6" width="24" height="2" fill="#454545"/><rect x="36" y="8" width="28" height="2" fill="#7a7a7a"/><rect x="38" y="8" width="24" height="2" fill="#454545"/><rect x="36" y="10" width="28" height="2" fill="#7a7a7a"/><rect x="38" y="10" width="24" height="2" fill="#454545"/><rect x="36" y="12" width="28" height="2" fill="#7a7a7a"/><rect x="38" y="12" width="24" height="2" fill="#454545"/><rect x="36" y="14" width="28" height="2" fill="#7a7a7a"/><rect x="38" y="14" width="24" height="2" fill="#454545"/><rect x="36" y="16" width="28" height="2" fill="#7a7a7a"/><rect x="38" y="16" width="24" height="2" fill="#454545"/><rect x="36" y="18" width="28" height="2" fill="#7a7a7a"/><rect x="38" y="18" width="24" height="2" fill="#454545"/><rect x="36" y="20" width="28" height="2" fill="#7a7a7a"/><rect x="38" y="20" width="24" height="2" fill="#454545"/><rect x="38" y="22" width="24" height="2" fill="#7a7a7a"/><rect x="40" y="22" width="20" height="2" fill="#454545"/><rect x="40" y="24" width="20" height="2" fill="#7a7a7a"/><rect x="42" y="24" width="16" height="2" fill="#454545"/><rect x="42" y="26" width="16" height="2" fill="#7a7a7a"/><rect x="44" y="26" width="12" height="2" fill="#454545"/><rect x="42" y="0" width="16" height="2" fill="#5a5a5a"/><rect x="42" y="26" width="16" height="2" fill="#5a5a5a"/><rect x="8" y="8" width="12" height="12" fill="#ffffff"/><rect x="12" y="8" width="4" height="2" fill="#454545"/><rect x="12" y="18" width="4" height="2" fill="#454545"/><rect x="8" y="12" width="2" height="4" fill="#454545"/><rect x="18" y="12" width="2" height="4" fill="#454545"/><rect x="42" y="12" width="12" height="2" fill="#ffffff"/><rect x="42" y="20" width="12" height="2" fill="#ffffff"/><rect x="42" y="12" width="2" height="10" fill="#ffffff"/><rect x="52" y="12" width="2" height="10" fill="#ffffff"/><rect x="46" y="8" width="12" height="2" fill="#ffffff"/><rect x="56" y="8" width="2" height="10" fill="#ffffff"/><rect x="46" y="10" width="2" height="2" fill="#ffffff"/><rect x="54" y="16" width="2" height="2" fill="#ffffff"/></svg>
</body></html>
